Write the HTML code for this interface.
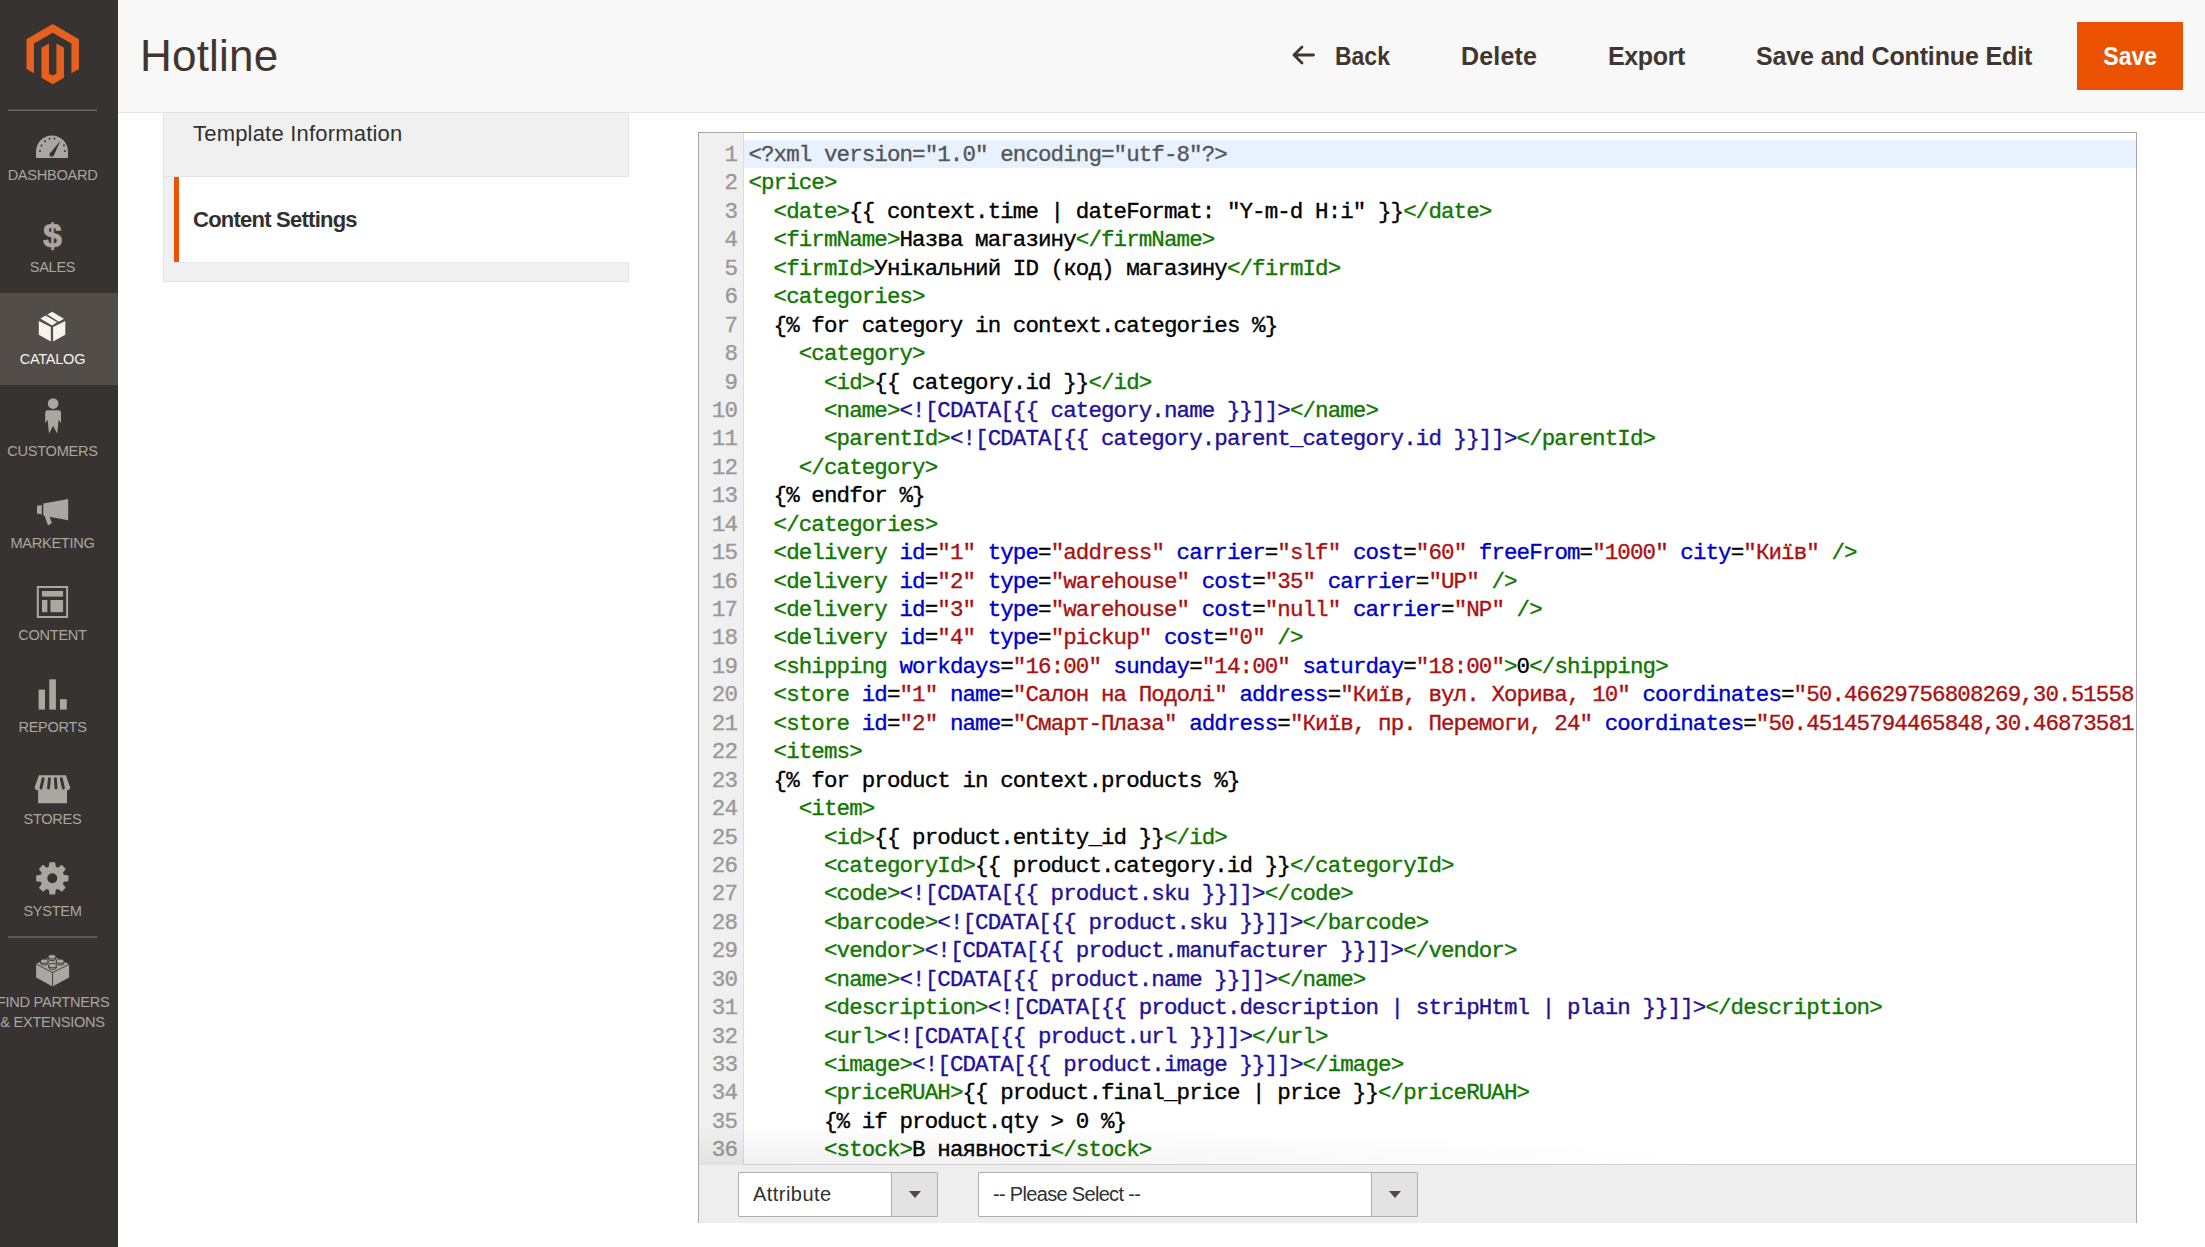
<!DOCTYPE html>
<html><head><meta charset="utf-8">
<style>
*{box-sizing:border-box;margin:0;padding:0}
html,body{width:2205px;height:1247px;overflow:hidden;background:#fff;font-family:"Liberation Sans",sans-serif}
.abs{position:absolute}
#side{position:absolute;left:0;top:0;width:118px;height:1247px;background:#373330}
#active{position:absolute;left:0;top:293px;width:118px;height:92px;background:#524d49}
.mi{position:absolute;left:0;width:105px;text-align:center;font-size:14.6px;letter-spacing:-0.3px;color:#aaa6a0;white-space:nowrap;line-height:20px}
.mi.on{color:#f7f3eb}
.div{position:absolute;left:8px;width:89px;height:2px;background:#6e6761}
#header{position:absolute;left:118px;top:0;width:2087px;height:113px;background:#f8f8f8;border-bottom:1px solid #e3e3e3}
#title{position:absolute;left:140px;top:30.7px;font-size:44px;letter-spacing:0.2px;color:#41362f;line-height:50px}
.btn{position:absolute;top:40.8px;font-size:25px;font-weight:bold;color:#41362f;line-height:30px;white-space:nowrap}
#save{position:absolute;left:2077px;top:22px;width:106px;height:68px;background:#eb5202;color:#fff;font-size:25px;font-weight:bold;line-height:68px;text-align:center}
#save span{display:inline-block;transform:scaleX(0.923)}
#tabs{position:absolute;left:163px;top:113px;width:466px;height:169px;background:#f0f0f0;border:1px solid #e3e3e3;border-top:0}
#tab2{position:absolute;left:174px;top:176px;width:455px;height:86px;background:#fff;border-left:5px solid #eb5202}
.tabt{position:absolute;left:193px;font-size:22px;color:#303030;line-height:26px;white-space:nowrap}
#ed{position:absolute;left:698px;top:132px;width:1439px;height:1091px;border:1.5px solid #a6a6a6;border-bottom:0;background:#eee}
#code{position:absolute;left:699px;top:133px;width:1437px;height:1032px;background:#fff;overflow:hidden}
#gut{position:absolute;left:0;top:0;width:45px;height:1032px;background:#f0f0f0;border-right:1px solid #ddd}
#hl{position:absolute;left:45px;top:7px;width:1400px;height:28px;background:#e8f2ff}
.cm{font-family:"Liberation Mono",monospace;font-size:22.5px;letter-spacing:-0.91px;line-height:28.45px;white-space:pre;-webkit-text-stroke:0.35px currentColor}
#nums{position:absolute;left:0;top:8px;width:38px;text-align:right;color:#999}
#lines{position:absolute;left:49.4px;top:8px;width:1385.5px;overflow:hidden;color:#000}
.ln{height:28.45px}
.m{color:#555}.t{color:#170}.b{color:#00c}.s{color:#a11}.a{color:#219}
.sel{position:absolute;top:1172px;height:44.5px;background:#fff;border:1px solid #adadad;border-radius:1px;font-size:20px;color:#303030;line-height:42px;padding-left:14px;white-space:nowrap}
.selb{position:absolute;top:0;right:0;width:46px;height:42.5px;background:#e3e3e3;border-left:1px solid #adadad}
.selb:after{content:"";position:absolute;left:17px;top:18px;border-left:6px solid transparent;border-right:6px solid transparent;border-top:7px solid #514943}
</style></head><body>
<div id="side"></div>
<div id="active"></div>
<svg class="abs" style="left:0;top:0" width="118" height="1247" viewBox="0 0 118 1247">
  <!-- logo -->
  <g transform="translate(26.5,24) scale(0.1993)" fill="#e8601f">
    <path d="M131.5,0 L0,76 V226 L37.6,247.7 V97.5 L131.5,43.3 L225.4,97.5 V247.7 L263,226 V76 Z"/>
    <path d="M150.3,248 L131.5,258.8 L112.7,248 V97.6 L75.1,119.3 V269.5 L131.5,302 L187.9,269.5 V119.3 L150.3,97.6 Z"/>
  </g>
  <rect x="8" y="109.5" width="89" height="1.5" fill="#6e6761"/>
  <rect x="8" y="936.3" width="89" height="1.5" fill="#6e6761"/>
  <g fill="#aaa6a0">
    <!-- dashboard -->
    <path d="M36,158 L36,151.5 A16,16 0 0 1 68,151.5 L68,158 Z"/>
    <!-- customers -->
    <circle cx="53.1" cy="403.6" r="5.3"/>
    <path d="M47,410.3 L59.2,410.3 Q61,410.6 61,413 L61,423 L58.6,419.8 L57.2,433.8 L53.1,425.8 L49,433.8 L47.6,419.8 L45.2,423 L45.2,413 Q45.2,410.6 47,410.3 Z"/>
    <!-- marketing -->
    <path d="M37,505.7 L41.8,504.9 L41.8,514.4 L37,513.6 Z"/>
    <path d="M43.3,503.5 L68.2,499 L68.2,520.3 L49.6,516.8 L51.9,523.1 L48,525.4 L44.6,515.8 L43.3,515.8 Z"/>
    <!-- content -->
    <path fill-rule="evenodd" d="M36.8,586 H68.1 V618 H36.8 Z M38.8,588 V616 H66.1 V588 Z"/>
    <rect x="42" y="591" width="21.1" height="5.6"/>
    <rect x="42" y="600" width="5.4" height="12.2"/>
    <rect x="50.4" y="600" width="12.7" height="12.2"/>
    <!-- reports -->
    <rect x="38.6" y="689.6" width="6.4" height="20"/>
    <rect x="49.3" y="679.3" width="6.6" height="30.3"/>
    <rect x="60" y="699.2" width="6.8" height="10.4"/>
    <!-- stores -->
    <path d="M38.9,775.2 H65.9 L70.1,787.3 Q70.1,790.3 67,790.3 V803.3 H38.1 V790.3 Q34.7,790.3 34.7,787.3 Z"/>
    <!-- system gear -->
    <path fill-rule="evenodd" d="M48.79,866.82 L49.45,862.15 L55.15,862.15 L55.81,866.82 L57.93,867.70 L61.71,864.87 L65.73,868.89 L62.90,872.67 L63.78,874.79 L68.45,875.45 L68.45,881.15 L63.78,881.81 L62.90,883.93 L65.73,887.71 L61.71,891.73 L57.93,888.90 L55.81,889.78 L55.15,894.45 L49.45,894.45 L48.79,889.78 L46.67,888.90 L42.89,891.73 L38.87,887.71 L41.70,883.93 L40.82,881.81 L36.15,881.15 L36.15,875.45 L40.82,874.79 L41.70,872.67 L38.87,868.89 L42.89,864.87 L46.67,867.70 Z M57.30,878.30 A5.00,5.00 0 1 0 47.30,878.30 A5.00,5.00 0 1 0 57.30,878.30 Z"/>
    <!-- lego -->
    <path d="M36.1,964 L52.5,955.5 L69.1,964.3 L69.1,977.5 L52.5,986.6 L36.1,977.5 Z"/>
  </g>
  <g fill="#373330">
    <!-- dashboard dots + needle -->
    <circle cx="40" cy="151" r="1"/><circle cx="41.5" cy="145.5" r="1"/><circle cx="45" cy="141.2" r="1"/><circle cx="49.5" cy="138.8" r="1"/><circle cx="54.5" cy="138.6" r="1"/><circle cx="64" cy="145.5" r="1"/><circle cx="65" cy="151" r="1"/>
    <path d="M50,153.5 L60.5,140.5 L53.8,155.5 Z"/><circle cx="51.7" cy="154.5" r="2.3"/>
    <!-- stores stripes -->
  </g>
  <g stroke="#373330" stroke-width="2.9" stroke-linecap="round" fill="none">
    <path d="M43.1,778.6 L41,788"/><path d="M49.4,778.6 L48.5,788"/><path d="M55.4,778.6 L56,788"/><path d="M61.3,778.6 L63.4,788"/>
  </g>
  <g fill="#373330">
  </g>
  <g fill="none" stroke="#373330" stroke-width="0.9">
    <path d="M36.1,964 L52.5,972.6 L69.1,964.3 M52.5,972.6 V986.6"/>
  </g>
  <g fill="#aaa6a0" stroke="#373330" stroke-width="0.9">
    <path d="M48,956.8 v1.6 a4,2.3 0 0 0 8,0 v-1.6 a4,2.3 0 0 0 -8,0 a4,2.3 0 0 0 8,0"/>
    <path d="M40.3,961.2 v1.6 a4,2.3 0 0 0 8,0 v-1.6 a4,2.3 0 0 0 -8,0 a4,2.3 0 0 0 8,0"/>
    <path d="M56.2,961.2 v1.6 a4,2.3 0 0 0 8,0 v-1.6 a4,2.3 0 0 0 -8,0 a4,2.3 0 0 0 8,0"/>
    <path d="M48.5,965.6 v1.6 a4,2.3 0 0 0 8,0 v-1.6 a4,2.3 0 0 0 -8,0 a4,2.3 0 0 0 8,0"/>
  </g>
  <!-- catalog box -->
  <g fill="#f7f3eb">
    <path d="M38.8,321 L50.8,327.1 L50.8,341.6 L38.8,334.7 Z"/>
    <path d="M53.1,327.1 L65.3,321 L65.3,334.7 L53.1,341.6 Z"/>
    <path d="M40.4,318.6 L45.8,315.6 L57.1,322.3 L52,325.6 Z"/>
    <path d="M47.4,314.6 L52.1,311.8 L63.9,318.8 L58.9,321.8 Z"/>
  </g>
</svg>
<div class="mi" style="top:165px">DASHBOARD</div>
<div class="mi" style="top:257px">SALES</div>
<div class="mi on" style="top:349px">CATALOG</div>
<div class="mi" style="top:441px">CUSTOMERS</div>
<div class="mi" style="top:533px">MARKETING</div>
<div class="mi" style="top:625px">CONTENT</div>
<div class="mi" style="top:717px">REPORTS</div>
<div class="mi" style="top:809px">STORES</div>
<div class="mi" style="top:901px">SYSTEM</div>
<div class="mi" style="top:992px;left:-3px">FIND PARTNERS</div>
<div class="mi" style="top:1012px;left:0px">&amp; EXTENSIONS</div>
<div class="abs" style="left:0;top:215px;width:105px;text-align:center;font-size:34px;font-weight:bold;color:#aaa6a0;line-height:40px;-webkit-text-stroke:0.7px #aaa6a0">$</div>

<div id="header"></div>
<div id="title">Hotline</div>
<svg class="abs" style="left:1290px;top:44px" width="26" height="22" viewBox="0 0 26 22"><path d="M12,3 L4,11 L12,19 M4,11 H23.5" stroke="#41362f" stroke-width="2.8" fill="none" stroke-linecap="round" stroke-linejoin="round"/></svg>
<div class="btn" style="left:1335px;transform:scaleX(0.919);transform-origin:0 0">Back</div>
<div class="btn" style="left:1461px;letter-spacing:0.18px">Delete</div>
<div class="btn" style="left:1608px;letter-spacing:-0.36px">Export</div>
<div class="btn" style="left:1756px;letter-spacing:-0.14px">Save and Continue Edit</div>
<div id="save"><span>Save</span></div>

<div id="tabs"></div>
<div id="tab2"></div>
<div class="abs" style="left:163px;top:176px;width:466px;height:1px;background:#e3e3e3"></div>
<div class="abs" style="left:179px;top:262px;width:450px;height:1px;background:#e8e8e8"></div>
<div class="tabt" style="top:121px;letter-spacing:0.2px">Template Information</div>
<div class="tabt" style="top:207px;font-weight:bold;letter-spacing:-0.76px">Content Settings</div>

<div id="ed"></div>
<div id="code">
  <div id="gut"></div>
  <div id="hl"></div>
  <div id="nums" class="cm"><div class="ln">1</div><div class="ln">2</div><div class="ln">3</div><div class="ln">4</div><div class="ln">5</div><div class="ln">6</div><div class="ln">7</div><div class="ln">8</div><div class="ln">9</div><div class="ln">10</div><div class="ln">11</div><div class="ln">12</div><div class="ln">13</div><div class="ln">14</div><div class="ln">15</div><div class="ln">16</div><div class="ln">17</div><div class="ln">18</div><div class="ln">19</div><div class="ln">20</div><div class="ln">21</div><div class="ln">22</div><div class="ln">23</div><div class="ln">24</div><div class="ln">25</div><div class="ln">26</div><div class="ln">27</div><div class="ln">28</div><div class="ln">29</div><div class="ln">30</div><div class="ln">31</div><div class="ln">32</div><div class="ln">33</div><div class="ln">34</div><div class="ln">35</div><div class="ln">36</div></div>
  <div id="lines" class="cm"><div class="ln"><span class="m">&lt;?xml version=&quot;1.0&quot; encoding=&quot;utf-8&quot;?&gt;</span></div><div class="ln"><span class="t">&lt;price</span><span class="t">&gt;</span></div><div class="ln">  <span class="t">&lt;date</span><span class="t">&gt;</span>{{ context.time | dateFormat: &quot;Y-m-d H:i&quot; }}<span class="t">&lt;/date</span><span class="t">&gt;</span></div><div class="ln">  <span class="t">&lt;firmName</span><span class="t">&gt;</span>Назва магазину<span class="t">&lt;/firmName</span><span class="t">&gt;</span></div><div class="ln">  <span class="t">&lt;firmId</span><span class="t">&gt;</span>Унікальний ID (код) магазину<span class="t">&lt;/firmId</span><span class="t">&gt;</span></div><div class="ln">  <span class="t">&lt;categories</span><span class="t">&gt;</span></div><div class="ln">  {% for category in context.categories %}</div><div class="ln">    <span class="t">&lt;category</span><span class="t">&gt;</span></div><div class="ln">      <span class="t">&lt;id</span><span class="t">&gt;</span>{{ category.id }}<span class="t">&lt;/id</span><span class="t">&gt;</span></div><div class="ln">      <span class="t">&lt;name</span><span class="t">&gt;</span><span class="a">&lt;![CDATA[{{ category.name }}]]&gt;</span><span class="t">&lt;/name</span><span class="t">&gt;</span></div><div class="ln">      <span class="t">&lt;parentId</span><span class="t">&gt;</span><span class="a">&lt;![CDATA[{{ category.parent_category.id }}]]&gt;</span><span class="t">&lt;/parentId</span><span class="t">&gt;</span></div><div class="ln">    <span class="t">&lt;/category</span><span class="t">&gt;</span></div><div class="ln">  {% endfor %}</div><div class="ln">  <span class="t">&lt;/categories</span><span class="t">&gt;</span></div><div class="ln">  <span class="t">&lt;delivery</span> <span class="b">id</span>=<span class="s">&quot;1&quot;</span> <span class="b">type</span>=<span class="s">&quot;address&quot;</span> <span class="b">carrier</span>=<span class="s">&quot;slf&quot;</span> <span class="b">cost</span>=<span class="s">&quot;60&quot;</span> <span class="b">freeFrom</span>=<span class="s">&quot;1000&quot;</span> <span class="b">city</span>=<span class="s">&quot;Київ&quot;</span> <span class="t">/&gt;</span></div><div class="ln">  <span class="t">&lt;delivery</span> <span class="b">id</span>=<span class="s">&quot;2&quot;</span> <span class="b">type</span>=<span class="s">&quot;warehouse&quot;</span> <span class="b">cost</span>=<span class="s">&quot;35&quot;</span> <span class="b">carrier</span>=<span class="s">&quot;UP&quot;</span> <span class="t">/&gt;</span></div><div class="ln">  <span class="t">&lt;delivery</span> <span class="b">id</span>=<span class="s">&quot;3&quot;</span> <span class="b">type</span>=<span class="s">&quot;warehouse&quot;</span> <span class="b">cost</span>=<span class="s">&quot;null&quot;</span> <span class="b">carrier</span>=<span class="s">&quot;NP&quot;</span> <span class="t">/&gt;</span></div><div class="ln">  <span class="t">&lt;delivery</span> <span class="b">id</span>=<span class="s">&quot;4&quot;</span> <span class="b">type</span>=<span class="s">&quot;pickup&quot;</span> <span class="b">cost</span>=<span class="s">&quot;0&quot;</span> <span class="t">/&gt;</span></div><div class="ln">  <span class="t">&lt;shipping</span> <span class="b">workdays</span>=<span class="s">&quot;16:00&quot;</span> <span class="b">sunday</span>=<span class="s">&quot;14:00&quot;</span> <span class="b">saturday</span>=<span class="s">&quot;18:00&quot;</span><span class="t">&gt;</span>0<span class="t">&lt;/shipping</span><span class="t">&gt;</span></div><div class="ln">  <span class="t">&lt;store</span> <span class="b">id</span>=<span class="s">&quot;1&quot;</span> <span class="b">name</span>=<span class="s">&quot;Салон на Подолі&quot;</span> <span class="b">address</span>=<span class="s">&quot;Київ, вул. Хорива, 10&quot;</span> <span class="b">coordinates</span>=<span class="s">&quot;50.46629756808269,30.51558&quot;</span> <span class="t">/&gt;</span></div><div class="ln">  <span class="t">&lt;store</span> <span class="b">id</span>=<span class="s">&quot;2&quot;</span> <span class="b">name</span>=<span class="s">&quot;Смарт-Плаза&quot;</span> <span class="b">address</span>=<span class="s">&quot;Київ, пр. Перемоги, 24&quot;</span> <span class="b">coordinates</span>=<span class="s">&quot;50.45145794465848,30.46873581&quot;</span> <span class="t">/&gt;</span></div><div class="ln">  <span class="t">&lt;items</span><span class="t">&gt;</span></div><div class="ln">  {% for product in context.products %}</div><div class="ln">    <span class="t">&lt;item</span><span class="t">&gt;</span></div><div class="ln">      <span class="t">&lt;id</span><span class="t">&gt;</span>{{ product.entity_id }}<span class="t">&lt;/id</span><span class="t">&gt;</span></div><div class="ln">      <span class="t">&lt;categoryId</span><span class="t">&gt;</span>{{ product.category.id }}<span class="t">&lt;/categoryId</span><span class="t">&gt;</span></div><div class="ln">      <span class="t">&lt;code</span><span class="t">&gt;</span><span class="a">&lt;![CDATA[{{ product.sku }}]]&gt;</span><span class="t">&lt;/code</span><span class="t">&gt;</span></div><div class="ln">      <span class="t">&lt;barcode</span><span class="t">&gt;</span><span class="a">&lt;![CDATA[{{ product.sku }}]]&gt;</span><span class="t">&lt;/barcode</span><span class="t">&gt;</span></div><div class="ln">      <span class="t">&lt;vendor</span><span class="t">&gt;</span><span class="a">&lt;![CDATA[{{ product.manufacturer }}]]&gt;</span><span class="t">&lt;/vendor</span><span class="t">&gt;</span></div><div class="ln">      <span class="t">&lt;name</span><span class="t">&gt;</span><span class="a">&lt;![CDATA[{{ product.name }}]]&gt;</span><span class="t">&lt;/name</span><span class="t">&gt;</span></div><div class="ln">      <span class="t">&lt;description</span><span class="t">&gt;</span><span class="a">&lt;![CDATA[{{ product.description | stripHtml | plain }}]]&gt;</span><span class="t">&lt;/description</span><span class="t">&gt;</span></div><div class="ln">      <span class="t">&lt;url</span><span class="t">&gt;</span><span class="a">&lt;![CDATA[{{ product.url }}]]&gt;</span><span class="t">&lt;/url</span><span class="t">&gt;</span></div><div class="ln">      <span class="t">&lt;image</span><span class="t">&gt;</span><span class="a">&lt;![CDATA[{{ product.image }}]]&gt;</span><span class="t">&lt;/image</span><span class="t">&gt;</span></div><div class="ln">      <span class="t">&lt;priceRUAH</span><span class="t">&gt;</span>{{ product.final_price | price }}<span class="t">&lt;/priceRUAH</span><span class="t">&gt;</span></div><div class="ln">      {% if product.qty &gt; 0 %}</div><div class="ln">      <span class="t">&lt;stock</span><span class="t">&gt;</span>В наявності<span class="t">&lt;/stock</span><span class="t">&gt;</span></div></div>
  <div class="abs" style="left:0;top:992px;width:1150px;height:40px;background:radial-gradient(ellipse 90% 100% at 0% 100%, rgba(0,0,0,0.06), rgba(0,0,0,0) 100%)"></div>
</div>
<div class="abs" style="left:744px;top:1164px;width:1392px;height:1px;background:#cfcfcf"></div>
<div class="sel" style="left:738px;width:199.5px;letter-spacing:0.45px">Attribute<div class="selb"></div></div>
<div class="sel" style="left:978px;width:439.5px;letter-spacing:-0.68px">-- Please Select --<div class="selb"></div></div>
</body></html>
